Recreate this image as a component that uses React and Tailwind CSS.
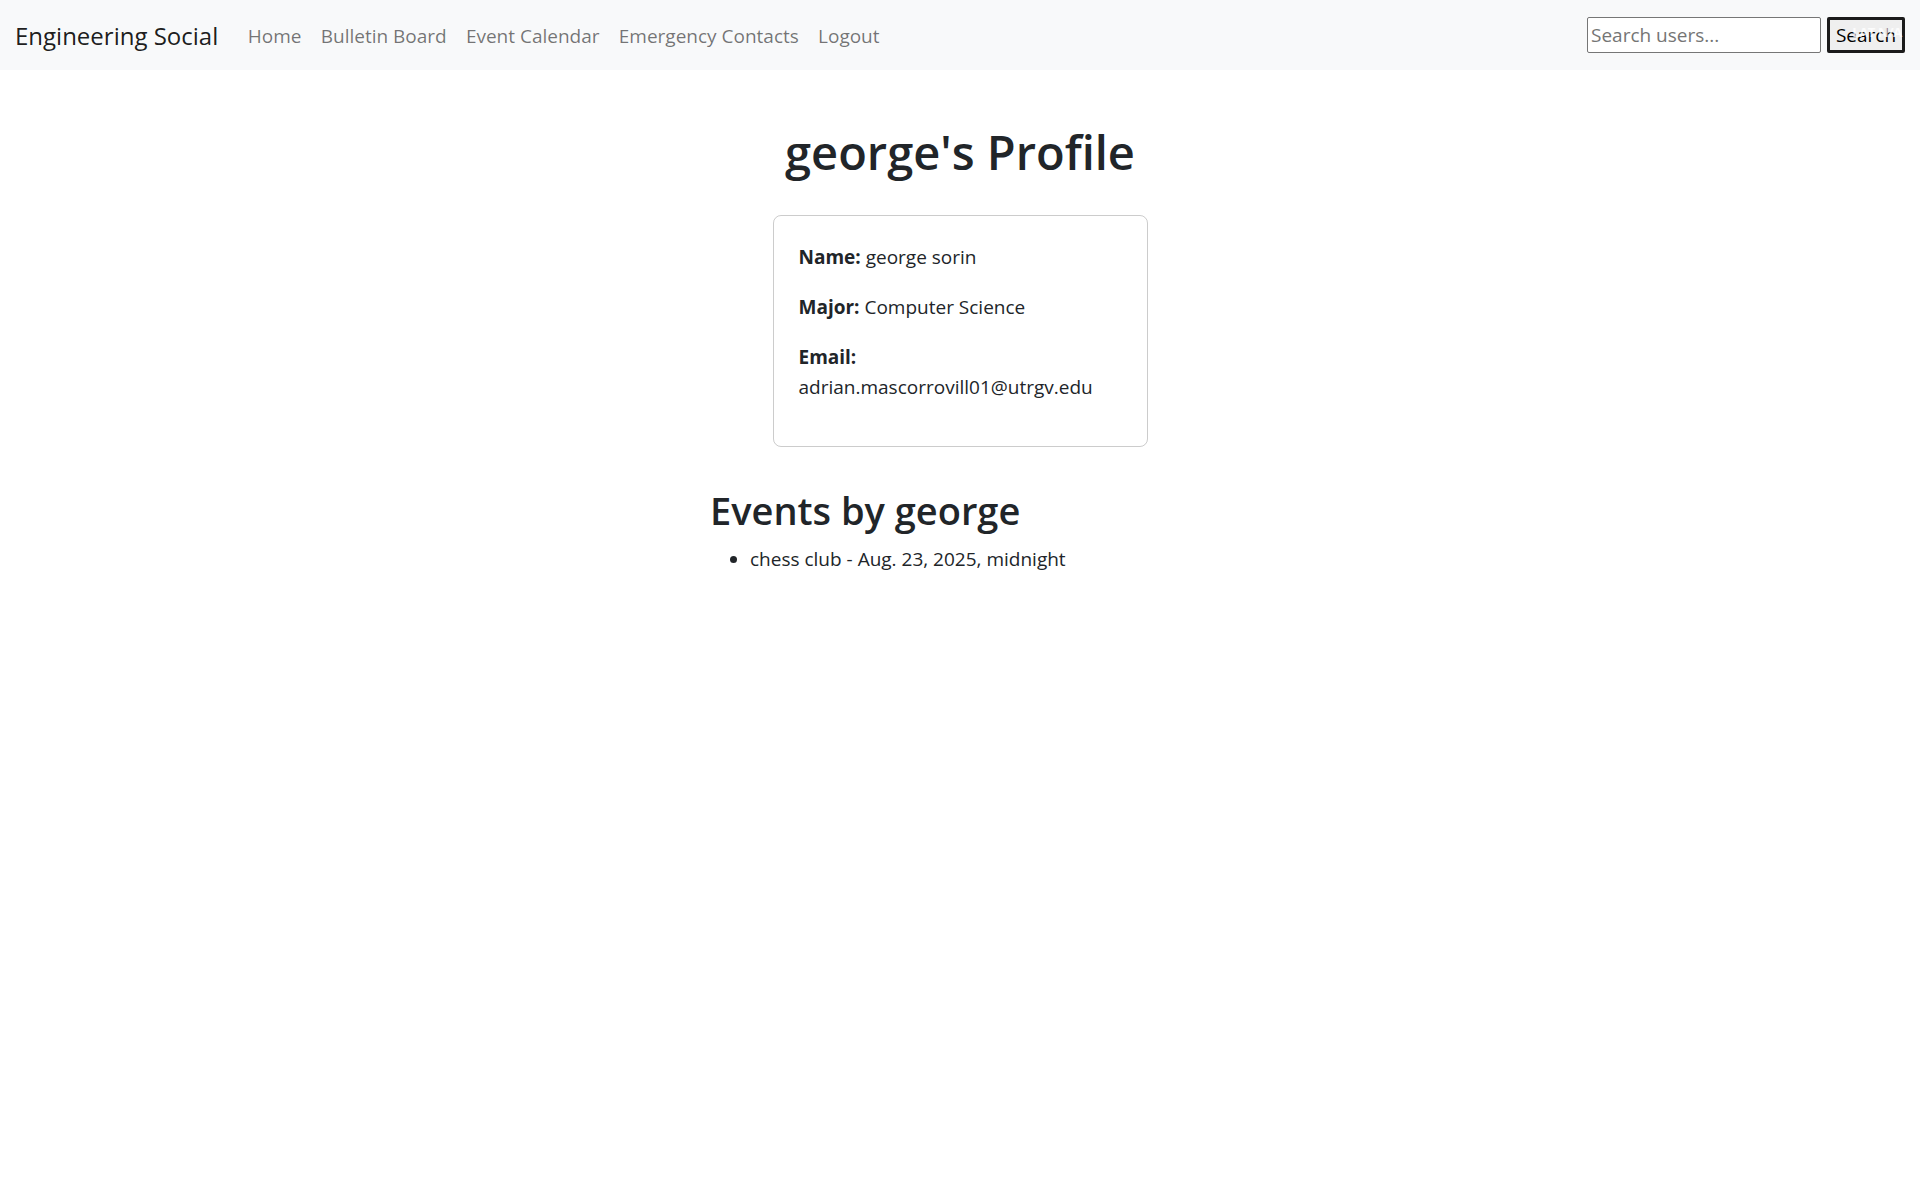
export default function App() {
  return (
    <div className="min-h-screen bg-white font-['Open_Sans',sans-serif] text-[#212529]">
      <nav className="h-[70px] bg-[#f8f9fa] flex items-center pl-[15px] pr-[15px]">
        <a className="text-[24px] text-black/90 mr-[20px] leading-[38px] pt-[2px]">Engineering Social</a>
        <div className="flex items-center pt-[2px]">
          {["Home", "Bulletin Board", "Event Calendar", "Emergency Contacts", "Logout"].map((l) => (
            <a key={l} className="px-[9.6px] text-[19px] text-black/55 leading-[30px]">{l}</a>
          ))}
        </div>
        <div className="ml-auto flex items-center">
          <input
            placeholder="Search users..."
            className="w-[234px] h-[36px] border border-[#767676] rounded-[2px] bg-white px-[3px] text-[19px] placeholder:text-[#757575] outline-none"
          />
          <div className="relative ml-[6px]">
            <button className="h-[36px] w-[78px] border-[3px] border-[#1b1b1b] bg-[#efefef] text-[19px] text-black rounded-[2px] leading-none">Search</button>
            <span className="absolute right-[3px] top-[6px] text-[13px] font-bold text-white/80 pointer-events-none tracking-tight">LAT N/A</span>
          </div>
        </div>
      </nav>
      <main className="flex flex-col items-center">
        <h1 className="mt-[52px] text-[47px] font-semibold leading-[60px] mb-[33px]">george's Profile</h1>
        <div className="w-[375px] border border-black/20 rounded-[8px] px-[25px] pt-[26px] pb-[24px] text-[19px] leading-[30px]">
          <p className="mb-[20px]"><strong>Name:</strong> george sorin</p>
          <p className="mb-[20px]"><strong>Major:</strong> Computer Science</p>
          <p className="mb-[20px]"><strong>Email:</strong> adrian.mascorrovill01@utrgv.edu</p>
        </div>
        <div className="w-[500px] mt-[39px]">
          <h2 className="text-[38px] font-semibold leading-[48px] mb-[10px]">Events by george</h2>
          <ul className="list-disc pl-[40px] text-[19px] leading-[30px]">
            <li>chess club - Aug. 23, 2025, midnight</li>
          </ul>
        </div>
      </main>
    </div>
  );
}
